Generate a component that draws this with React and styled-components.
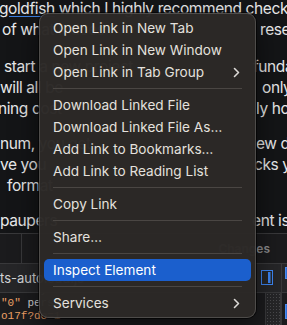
import React from "react";
import styled, { createGlobalStyle } from "styled-components";

const GlobalStyle = createGlobalStyle`
  html, body { margin: 0; padding: 0; background: #141517; }
  body { width: 287px; height: 325px; overflow: hidden; font-family: Inter, "Noto Sans", sans-serif; }
`;

const Page = styled.div`
  position: relative;
  width: 287px;
  height: 325px;
  overflow: hidden;
  background: #141517;
  display: flex;
  flex-direction: column;
`;

const Article = styled.div`
  margin-top: -2.5px;
  display: flex;
  flex-direction: column;
  color: #e9e9ea;
  font-size: 15.5px;
  letter-spacing: -0.4px;
  line-height: 21px;
`;

const Para = styled.div`
  margin-bottom: ${(p) => p.$after || 0}px;
`;

const FullLine = styled.div`
  height: 21px;
  white-space: nowrap;
  overflow: hidden;
  text-indent: ${(p) => p.$indent || 0}px;
`;

const Line = styled.div`
  display: grid;
  grid-template-columns: 240px 47px;
  height: 21px;
  white-space: nowrap;
`;

const Fragment = styled.span`
  overflow: hidden;
  text-indent: ${(p) => p.$indent || 0}px;
`;

const Link = styled.span`
  text-decoration: underline;
  text-decoration-color: #3d7fe0;
  text-underline-offset: 2px;
`;

const Devtools = styled.div`
  margin-top: 2px;
  flex: 1;
  display: flex;
  flex-direction: column;
  font-family: Inter, "Noto Sans", sans-serif;
`;

const Toolbar = styled.div`
  height: 29px;
  display: flex;
  align-items: center;
  background: #1b1b1d;
  border-top: 1px solid #39393b;
  border-bottom: 1px solid #39393b;
`;

const ToolbarSlot = styled.div`
  width: 21px;
  align-self: stretch;
  border-right: 1px solid #39393b;
`;

const PanelTab = styled.div`
  margin-left: auto;
  padding-right: 17px;
  color: #8c8c8f;
  font-size: 12px;
  font-weight: 600;
`;

const TabRow = styled.div`
  height: 28px;
  display: flex;
  align-items: center;
  background: #262628;
  border-bottom: 1px solid #39393b;
`;

const FileTab = styled.div`
  flex: 1;
  overflow: hidden;
  white-space: nowrap;
  color: #d4d4d6;
  font-size: 13px;
`;

const ToggleIcon = styled.svg`
  margin-right: 8px;
  flex: none;
`;

const Rail = styled.div`
  width: 6px;
  align-self: stretch;
  border-left: 1px solid #39393b;
  padding-top: ${(p) => p.$top}px;
  box-sizing: border-box;
`;

const RailMark = styled.div`
  margin-left: 3px;
  width: 3px;
  height: ${(p) => p.$h}px;
  background: #2f6fd6;
  border: 1px solid #4a8af0;
  box-sizing: border-box;
`;

const CodeRow = styled.div`
  flex: 1;
  display: grid;
  grid-template-columns: 265px 16px 6px;
  background: #1c1c1e;
  overflow: hidden;
`;

const CodePane = styled.div`
  overflow: hidden;
  font-family: "Liberation Mono", "DejaVu Sans Mono", monospace;
  font-size: 11px;
  line-height: 13px;
  color: #d8d8da;
  white-space: pre;
`;

const CodeLines = styled.div`
  margin-top: -9px;
  padding-left: 1px;
`;

const Str = styled.span`
  color: #eea167;
`;

const Dotted = styled.div`
  border-left: 1px solid #39393b;
  border-right: 1px solid #39393b;
  background-color: #262628;
  background-image: radial-gradient(#4a4a4d 0.7px, transparent 0.9px);
  background-size: 3px 3px;
`;

const Menu = styled.div`
  position: absolute;
  left: 39px;
  top: 13px;
  width: 217px;
  box-sizing: border-box;
  padding: 4px 5px;
  background: rgba(44, 41, 39, 0.98);
  border-radius: 9px;
  box-shadow: 0 0 0 1px rgba(0, 0, 0, 0.6), inset 0 0 0 1px rgba(255, 255, 255, 0.17),
    0 10px 28px rgba(0, 0, 0, 0.55);
  font-family: Inter, "Noto Sans", sans-serif;
  font-size: 13.6px;
  color: #e4e1de;
`;

const Item = styled.div`
  height: 22px;
  display: flex;
  align-items: center;
  justify-content: space-between;
  padding: 0 11px 0 9px;
  border-radius: 5px;
  white-space: nowrap;
  background: ${(p) => (p.$active ? "#1b5fcd" : "transparent")};
  color: ${(p) => (p.$active ? "#ffffff" : "#e4e1de")};
`;

const Separator = styled.div`
  height: 11px;
  display: flex;
  align-items: center;
  padding: 0 9px;
  &::after {
    content: "";
    flex: 1;
    height: 1px;
    background: #4a4643;
  }
`;

const Chevron = () => (
  <svg width="7" height="11" viewBox="0 0 7 11">
    <path d="M1.5 1.5 L5.5 5.5 L1.5 9.5" fill="none" stroke="#dcd9d6" strokeWidth="1.6" strokeLinecap="round" strokeLinejoin="round" />
  </svg>
);

const menu = [
  [{ label: "Open Link in New Tab" }, { label: "Open Link in New Window" }, { label: "Open Link in Tab Group", sub: true }],
  [
    { label: "Download Linked File" },
    { label: "Download Linked File As…" },
    { label: "Add Link to Bookmarks…" },
    { label: "Add Link to Reading List" },
  ],
  [{ label: "Copy Link" }],
  [{ label: "Share…" }],
  [{ label: "Inspect Element", active: true }],
  [{ label: "Services", sub: true }],
];

export default function App() {
  return (
    <>
      <GlobalStyle />
      <Page>
        <Article>
          <Para $after={16}>
            <FullLine $indent={-1}>
              <Link>goldfish</Link> which I highly recommend checking
            </FullLine>
            <Line>
              <Fragment $indent={2}>of what it does</Fragment>
              <Fragment $indent={20}>research</Fragment>
            </Line>
          </Para>
          <Para $after={14}>
            <Line>
              <Fragment $indent={4}>start a new project</Fragment>
              <Fragment $indent={13}>fundamentals</Fragment>
            </Line>
            <Line>
              <Fragment $indent={0}>will all be</Fragment>
              <Fragment $indent={22}>only</Fragment>
            </Line>
            <Line>
              <Fragment $indent={-2}>ning cost</Fragment>
              <Fragment $indent={16}>ly hosted</Fragment>
            </Line>
          </Para>
          <Para $after={14}>
            <Line>
              <Fragment $indent={0}>num, you get</Fragment>
              <Fragment $indent={16}>ew directory</Fragment>
            </Line>
            <Line>
              <Fragment $indent={0}>ve you</Fragment>
              <Fragment $indent={14}>cks your</Fragment>
            </Line>
            <Line>
              <Fragment $indent={7}>format</Fragment>
              <Fragment />
            </Line>
          </Para>
          <Para>
            <Line>
              <Fragment $indent={0}>paupers</Fragment>
              <Fragment $indent={12}>ent is</Fragment>
            </Line>
          </Para>
        </Article>

        <Devtools>
          <Toolbar>
            <ToolbarSlot />
            <PanelTab>Changes</PanelTab>
          </Toolbar>
          <TabRow>
            <FileTab>ts-autoload.js</FileTab>
            <ToggleIcon width="12" height="15" viewBox="0 0 12 15">
              <rect x="0.5" y="0.5" width="11" height="14" fill="none" stroke="#3d86f5" strokeWidth="1" />
              <rect x="7" y="2" width="2.5" height="11" fill="#3d86f5" />
            </ToggleIcon>
            <Rail $top={3}>
              <RailMark $h={12} />
            </Rail>
          </TabRow>
          <CodeRow>
            <CodePane>
              <CodeLines>
                <div>{"  - ary/."}</div>
                <div>
                  <Str>"0"</Str> perspective
                </div>
                <div>
                  <Str>o17f?do=1</Str>
                </div>
              </CodeLines>
            </CodePane>
            <Dotted />
            <Rail $top={11}>
              <RailMark $h={15} />
            </Rail>
          </CodeRow>
        </Devtools>

        <Menu>
          {menu.map((group, gi) => (
            <React.Fragment key={gi}>
              {gi > 0 && <Separator />}
              {group.map((it) => (
                <Item key={it.label} $active={it.active}>
                  <span>{it.label}</span>
                  {it.sub && <Chevron />}
                </Item>
              ))}
            </React.Fragment>
          ))}
        </Menu>
      </Page>
    </>
  );
}
